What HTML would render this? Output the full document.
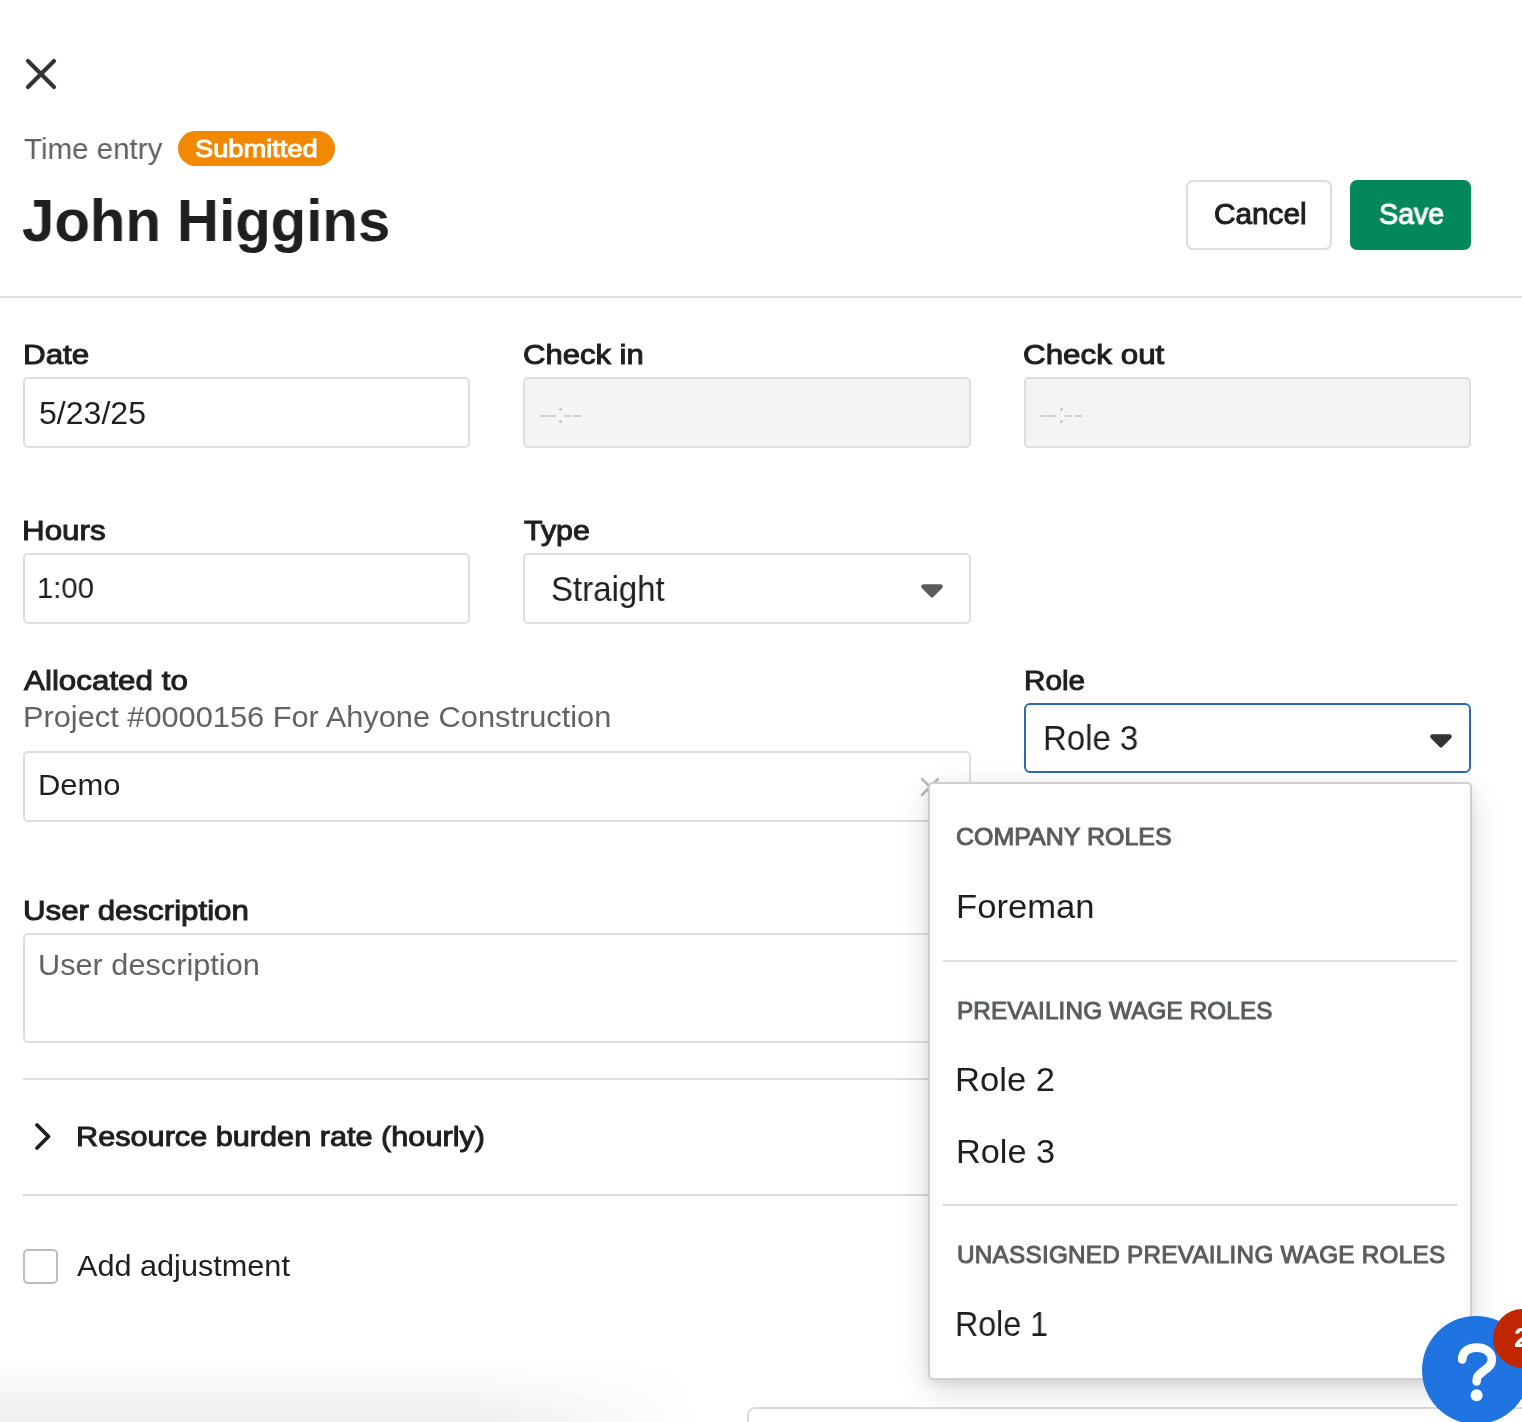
<!DOCTYPE html>
<html><head><meta charset="utf-8"><title>Time entry</title>
<style>
html,body{margin:0;padding:0;}
body{width:1522px;height:1422px;overflow:hidden;background:#fff;position:relative;font-family:"Liberation Sans",sans-serif;}
.t{position:absolute;white-space:pre;line-height:normal;will-change:transform;font-family:"Liberation Sans",sans-serif;}
.box{position:absolute;box-sizing:border-box;}
.inp{border:2px solid #dedede;border-radius:5px;background:#fff;}
.dis{background:#f4f4f4;}
.hr{position:absolute;height:2px;background:#dcdcdc;}

</style></head>
<body>
<svg class="box" style="left:20px;top:53px" width="42" height="42" viewBox="0 0 42 42"><path d="M8 8 L34 34 M34 8 L8 34" stroke="#333" stroke-width="4.2" stroke-linecap="round" fill="none"/></svg>
<div class="box" style="left:178px;top:131px;width:157px;height:35px;border-radius:18px;background:#f28700"></div>
<div class="box" style="left:1186px;top:180px;width:146px;height:70px;border:2px solid #dcdcdc;border-radius:7px;background:#fff"></div>
<div class="box" style="left:1350px;top:180px;width:121px;height:70px;border-radius:7px;background:#03885c"></div>
<div class="hr" style="left:0;top:296px;width:1522px"></div>

<div class="box inp" style="left:23px;top:377px;width:447px;height:71px"></div>
<div class="box inp dis" style="left:523px;top:377px;width:448px;height:71px"></div>
<div class="box inp dis" style="left:1024px;top:377px;width:447px;height:71px"></div>

<div class="box" style="left:539.5px;top:414.6px;width:7.3px;height:2px;background:#d0d0d0"></div>
<div class="box" style="left:547.9px;top:414.6px;width:8.1px;height:2px;background:#d0d0d0"></div>
<div class="box" style="left:564.3px;top:414.6px;width:7.7px;height:2px;background:#d0d0d0"></div>
<div class="box" style="left:574.0px;top:414.6px;width:7.2px;height:2px;background:#d0d0d0"></div>
<div class="box" style="left:559px;top:408.2px;width:3px;height:3px;border-radius:50%;background:#c4c4c4"></div>
<div class="box" style="left:559px;top:420px;width:3px;height:3px;border-radius:50%;background:#c4c4c4"></div>
<div class="box" style="left:1040.0px;top:414.6px;width:7.3px;height:2px;background:#d0d0d0"></div>
<div class="box" style="left:1048.4px;top:414.6px;width:8.1px;height:2px;background:#d0d0d0"></div>
<div class="box" style="left:1064.8px;top:414.6px;width:7.7px;height:2px;background:#d0d0d0"></div>
<div class="box" style="left:1074.5px;top:414.6px;width:7.2px;height:2px;background:#d0d0d0"></div>
<div class="box" style="left:1059.5px;top:408.2px;width:3px;height:3px;border-radius:50%;background:#c4c4c4"></div>
<div class="box" style="left:1059.5px;top:420px;width:3px;height:3px;border-radius:50%;background:#c4c4c4"></div>
<div class="box inp" style="left:23px;top:553px;width:447px;height:71px"></div>
<div class="box inp" style="left:523px;top:553px;width:448px;height:71px"></div>
<svg class="box" style="left:918px;top:581px" width="28" height="20" viewBox="0 0 28 20"><path d="M5.4 5.5 L22.6 5.5 L14 14.3 Z" fill="#5a5a5a" stroke="#5a5a5a" stroke-width="4.5" stroke-linejoin="round"/></svg>

<div class="box inp" style="left:23px;top:751px;width:948px;height:71px"></div>
<div class="box" style="left:1024px;top:703px;width:447px;height:70px;border:2px solid #2e69b0;border-radius:6px;background:#fff"></div>
<svg class="box" style="left:1427px;top:731px" width="28" height="20" viewBox="0 0 28 20"><path d="M5.4 5.5 L22.6 5.5 L14 14.3 Z" fill="#333" stroke="#333" stroke-width="4.5" stroke-linejoin="round"/></svg>

<div class="box inp" style="left:23px;top:933px;width:1448px;height:110px"></div>
<div class="hr" style="left:23px;top:1078px;width:1448px"></div>
<svg class="box" style="left:28px;top:1117px" width="30" height="40" viewBox="0 0 30 40"><path d="M9 8 L20.5 19.5 L9 31" stroke="#1f1f1f" stroke-width="3.8" stroke-linecap="round" stroke-linejoin="round" fill="none"/></svg>
<div class="hr" style="left:23px;top:1194px;width:1448px"></div>
<div class="box" style="left:23px;top:1249px;width:35px;height:35px;border:2px solid #bdbdbd;border-radius:5px"></div>

<svg class="box" style="left:912px;top:770px" width="36" height="36" viewBox="0 0 36 36"><path d="M10 9 L26 25 M26 9 L10 25" stroke="#bbb" stroke-width="2.5" stroke-linecap="round" fill="none"/></svg>

<div class="box" style="left:0;top:1360px;width:760px;height:62px;background:linear-gradient(to bottom,rgba(0,0,0,0),rgba(0,0,0,0.065));-webkit-mask-image:linear-gradient(to right,#000 62%,transparent 92%)"></div>
<div class="box" style="left:747px;top:1407px;width:900px;height:60px;border:2px solid #dadada;border-radius:8px;background:#fff"></div>

<div class="box" style="left:928px;top:782px;width:544px;height:598px;border:2px solid #cfcfcf;border-radius:5px;background:#fff;box-shadow:0 3px 8px rgba(0,0,0,0.07),0 10px 30px rgba(0,0,0,0.15)"></div>
<div class="hr" style="left:943px;top:960px;width:514px"></div>
<div class="hr" style="left:943px;top:1204px;width:514px"></div>

<div class="t" style="left:24.00px;top:130.90px;font-size:30.38px;transform:scaleX(0.9716);transform-origin:0 0;color:#5e6061;">Time entry</div>
<div class="t" style="left:195.38px;top:135.40px;font-size:24.42px;transform:scaleX(1.1168);transform-origin:0 0;color:#fff;-webkit-text-stroke:1.0px #fff">Submitted</div>
<div class="t" style="left:22.02px;top:186.00px;font-size:59.59px;transform:scaleX(0.9759);transform-origin:0 0;color:#1f1f1f;font-weight:bold">John Higgins</div>
<div class="t" style="left:1213.98px;top:198.00px;font-size:29.07px;transform:scaleX(1.0230);transform-origin:0 0;color:#1f1f1f;-webkit-text-stroke:1.0px #1f1f1f">Cancel</div>
<div class="t" style="left:1379.02px;top:198.00px;font-size:29.07px;transform:scaleX(0.9844);transform-origin:0 0;color:#fff;-webkit-text-stroke:1.0px #fff">Save</div>
<div class="t" style="left:22.79px;top:338.30px;font-size:28.34px;transform:scaleX(1.1071);transform-origin:0 0;color:#1f1f1f;-webkit-text-stroke:1.0px #1f1f1f">Date</div>
<div class="t" style="left:38.95px;top:396.00px;font-size:30.52px;transform:scaleX(1.0505);transform-origin:0 0;color:#1f1f1f;">5/23/25</div>
<div class="t" style="left:523.40px;top:338.30px;font-size:28.34px;transform:scaleX(1.0953);transform-origin:0 0;color:#1f1f1f;-webkit-text-stroke:1.0px #1f1f1f">Check in</div>
<div class="t" style="left:1022.89px;top:338.30px;font-size:28.34px;transform:scaleX(1.1079);transform-origin:0 0;color:#1f1f1f;-webkit-text-stroke:1.0px #1f1f1f">Check out</div>
<div class="t" style="left:22.49px;top:514.30px;font-size:28.34px;transform:scaleX(1.1069);transform-origin:0 0;color:#1f1f1f;-webkit-text-stroke:1.0px #1f1f1f">Hours</div>
<div class="t" style="left:36.74px;top:571.30px;font-size:29.80px;transform:scaleX(0.9815);transform-origin:0 0;color:#1f1f1f;">1:00</div>
<div class="t" style="left:524.20px;top:514.30px;font-size:28.34px;transform:scaleX(1.0733);transform-origin:0 0;color:#1f1f1f;-webkit-text-stroke:1.0px #1f1f1f">Type</div>
<div class="t" style="left:551.07px;top:569.50px;font-size:34.16px;transform:scaleX(0.9652);transform-origin:0 0;color:#1f1f1f;">Straight</div>
<div class="t" style="left:24.31px;top:664.30px;font-size:28.34px;transform:scaleX(1.1068);transform-origin:0 0;color:#1f1f1f;-webkit-text-stroke:1.0px #1f1f1f">Allocated to</div>
<div class="t" style="left:22.94px;top:700.20px;font-size:29.80px;transform:scaleX(1.0324);transform-origin:0 0;color:#636363;">Project #0000156 For Ahyone Construction</div>
<div class="t" style="left:38.02px;top:768.30px;font-size:29.80px;transform:scaleX(1.0387);transform-origin:0 0;color:#1f1f1f;">Demo</div>
<div class="t" style="left:1023.61px;top:664.30px;font-size:28.34px;transform:scaleX(1.0473);transform-origin:0 0;color:#1f1f1f;-webkit-text-stroke:1.0px #1f1f1f">Role</div>
<div class="t" style="left:1042.64px;top:719.20px;font-size:34.59px;transform:scaleX(0.9526);transform-origin:0 0;color:#1f1f1f;">Role 3</div>
<div class="t" style="left:956.26px;top:823.30px;font-size:23.98px;transform:scaleX(1.0424);transform-origin:0 0;color:#5a5d5e;-webkit-text-stroke:1.0px #5a5d5e">COMPANY ROLES</div>
<div class="t" style="left:956.23px;top:887.60px;font-size:33.43px;transform:scaleX(1.0364);transform-origin:0 0;color:#1f1f1f;">Foreman</div>
<div class="t" style="left:956.90px;top:997.10px;font-size:24.27px;letter-spacing:0.130px;color:#5a5d5e;-webkit-text-stroke:1.0px #5a5d5e">PREVAILING WAGE ROLES</div>
<div class="t" style="left:955.35px;top:1059.80px;font-size:34.01px;transform:scaleX(1.0172);transform-origin:0 0;color:#1f1f1f;">Role 2</div>
<div class="t" style="left:956.35px;top:1132.50px;font-size:33.43px;transform:scaleX(1.0250);transform-origin:0 0;color:#1f1f1f;">Role 3</div>
<div class="t" style="left:956.90px;top:1241.10px;font-size:24.27px;letter-spacing:0.261px;color:#5a5d5e;-webkit-text-stroke:1.0px #5a5d5e">UNASSIGNED PREVAILING WAGE ROLES</div>
<div class="t" style="left:954.79px;top:1304.60px;font-size:34.30px;transform:scaleX(0.9383);transform-origin:0 0;color:#1f1f1f;">Role 1</div>
<div class="t" style="left:23.30px;top:894.30px;font-size:28.34px;transform:scaleX(1.1035);transform-origin:0 0;color:#1f1f1f;-webkit-text-stroke:1.0px #1f1f1f">User description</div>
<div class="t" style="left:38.03px;top:948.30px;font-size:29.65px;transform:scaleX(1.0357);transform-origin:0 0;color:#636363;">User description</div>
<div class="t" style="left:75.81px;top:1121.40px;font-size:28.05px;transform:scaleX(1.0932);transform-origin:0 0;color:#1f1f1f;-webkit-text-stroke:1.0px #1f1f1f">Resource burden rate (hourly)</div>
<div class="t" style="left:76.50px;top:1248.50px;font-size:29.51px;transform:scaleX(1.0387);transform-origin:0 0;color:#1f1f1f;">Add adjustment</div>

<div class="box" style="left:1422px;top:1316px;width:108px;height:108px;border-radius:50%;background:#2074e2"></div>
<svg class="box" style="left:1440px;top:1330px" width="72" height="80" viewBox="0 0 72 80"><path d="M22.2 29.5 C22.2 21.5 28.5 17.6 36.8 17.6 C45.5 17.6 51.8 22.5 51.8 29.5 C51.8 36 46.5 38.8 42 42.2 C38 45.2 36.6 47 36.6 51.5" stroke="#fff" stroke-width="8.6" stroke-linecap="round" stroke-linejoin="round" fill="none"/><circle cx="36.6" cy="65.3" r="6" fill="#fff"/></svg>
<div class="box" style="left:1493px;top:1308.5px;width:59px;height:59px;border-radius:50%;background:#c02700"></div>
<div class="t" style="left:1514px;top:1322px;font-size:28px;font-weight:bold;color:#fff">2</div>

</body></html>
